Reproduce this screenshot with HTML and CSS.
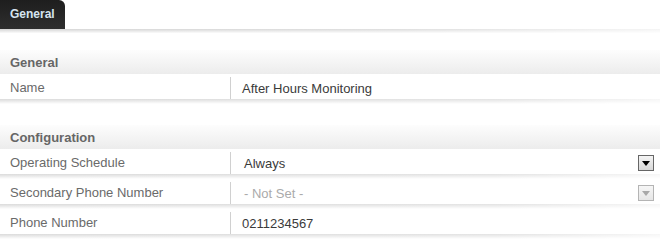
FILE: index.html
```html
<!DOCTYPE html>
<html lang="en">
<head>
    <meta charset="UTF-8">
    <title>After Hours Monitoring</title>
    <link rel="stylesheet" href="styles.css">
</head>
<body>

    <!-- Tab strip -->
    <div class="tabs">
        <div class="tab active">General</div>
    </div>
    <div class="tab-shadow"></div>

    <!-- General section -->
    <div class="section">
        <div class="section-title">General</div>
        <div class="field">
            <div class="field-body">
                <div class="field-label">Name</div>
                <div class="field-value">After Hours Monitoring</div>
            </div>
        </div>
    </div>

    <!-- Configuration section -->
    <div class="section">
        <div class="section-title">Configuration</div>
        <div class="field">
            <div class="field-body">
                <div class="field-label">Operating Schedule</div>
                <div class="field-value">
                    <div class="select">
                        <span class="select-text">Always</span>
                        <span class="select-btn"><span class="arrow"></span></span>
                    </div>
                </div>
            </div>
        </div>
        <div class="field">
            <div class="field-body">
                <div class="field-label">Secondary Phone Number</div>
                <div class="field-value">
                    <div class="select disabled">
                        <span class="select-text">- Not Set -</span>
                        <span class="select-btn"><span class="arrow"></span></span>
                    </div>
                </div>
            </div>
        </div>
        <div class="field">
            <div class="field-body">
                <div class="field-label">Phone Number</div>
                <div class="field-value">0211234567</div>
            </div>
        </div>
    </div>

</body>
</html>
```

FILE: styles.css
```css
/* Reset */
* {
    box-sizing: border-box;
    margin: 0;
    padding: 0;
}

body {
    width: 660px;
    background-color: #fff;
    font-family: "Liberation Sans", Arial, sans-serif;
    font-size: 13px;
    color: #333;
}

/* Tabs */
.tabs {
    display: flex;
    height: 29px;
}

.tab {
    padding: 0 10px;
    line-height: 29px;
    font-size: 12px;
    font-weight: bold;
    color: #d6e4f0;
    background: linear-gradient(to bottom, #1e1e1e, #2e2e2e);
    border-radius: 0 6px 0 0;
}

.tab-shadow {
    height: 4px;
    background: linear-gradient(to right, #d4d4d4 0%, #dcdcdc 60%, #f4f4f4 100%);
    -webkit-mask-image: linear-gradient(to bottom, #000, rgba(0, 0, 0, 0.1));
}

/* Sections */
.section {
    margin-top: 17px;
}

.section + .section {
    margin-top: 21px;
}

.section-title {
    height: 24px;
    padding-top: 2px;
    line-height: 22px;
    padding-left: 10px;
    font-weight: bold;
    color: #666;
    background: linear-gradient(to bottom, #fdfdfd, #ececec);
    margin-bottom: 1px;
}

/* Field rows */
.field::after {
    content: "";
    display: block;
    height: 5px;
    background: linear-gradient(to right, #dadada 0%, #e2e2e2 75%, #f6f6f6 100%);
    -webkit-mask-image: linear-gradient(to bottom, #000, rgba(0, 0, 0, 0));
}

.field + .field {
    margin-top: 1px;
}

.field-body {
    display: flex;
    align-items: center;
    height: 24px;
    padding-top: 2px;
    background-color: #fff;
}

.field-label {
    width: 231px;
    flex-shrink: 0;
    padding-left: 10px;
    color: #6a6a6a;
    align-self: stretch;
    border-right: 1px solid #d0d0d0;
    line-height: 22px;
}

.field-value {
    flex: 1;
    padding-left: 11px;
    color: #3a3a3a;
}

/* Select boxes */
.select {
    display: flex;
    align-items: center;
    justify-content: space-between;
    padding-left: 2px;
    padding-right: 6px;
}

.select.disabled .select-text {
    color: #aaa;
}

.select-btn {
    display: flex;
    align-items: center;
    justify-content: center;
    width: 16px;
    height: 16px;
    border: 1px solid #666;
    background: linear-gradient(to bottom, #f4f4f4, #d8d8d8);
}

.select .arrow {
    width: 0;
    height: 0;
    border-left: 4px solid transparent;
    border-right: 4px solid transparent;
    border-top: 5px solid #000;
    margin-top: 1px;
}

.select.disabled .select-btn {
    border-color: #b4b4b4;
    background: linear-gradient(to bottom, #f6f6f6, #e6e6e6);
}

.select.disabled .arrow {
    border-top-color: #a8a8a8;
}
```
